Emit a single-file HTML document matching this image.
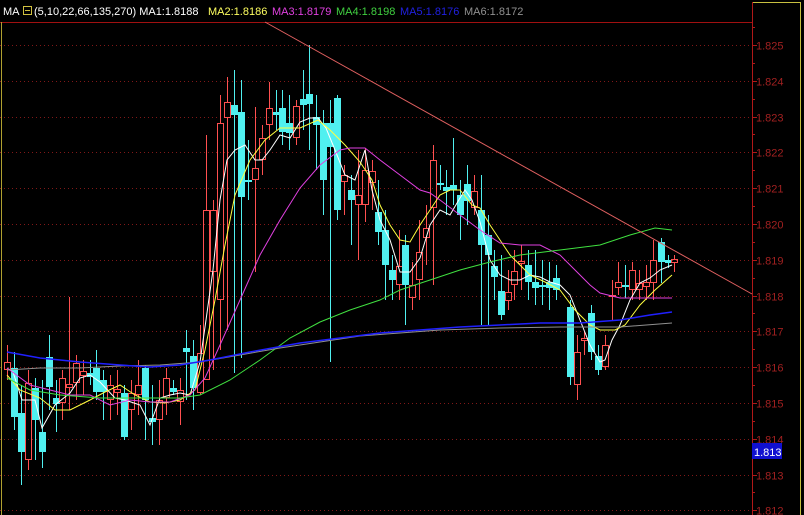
<!DOCTYPE html>
<html><head><meta charset="utf-8"><style>
html,body{margin:0;padding:0;background:#000;width:804px;height:515px;overflow:hidden}
svg{display:block}
text{font-family:"Liberation Sans",sans-serif;font-size:11px}
</style></head><body>
<svg id="s" width="804" height="515" xmlns="http://www.w3.org/2000/svg">
<rect width="804" height="515" fill="#000"/>
<line x1="0" y1="22.5" x2="752" y2="22.5" stroke="#a01010"/>
<line x1="1.5" y1="22" x2="1.5" y2="515" stroke="#b0a030"/>
<line x1="752" y1="2.5" x2="800" y2="2.5" stroke="#c8c040"/>
<line x1="800.5" y1="2" x2="800.5" y2="515" stroke="#c8c040"/>
<line x1="752.5" y1="2" x2="752.5" y2="515" stroke="#b01818"/>
<g id="grid"></g>
<g id="cd"></g>
<g id="ma" fill="none" stroke-width="1"></g>
<line x1="265" y1="22" x2="752" y2="294" stroke="#e06060"/>
<rect x="752" y="443" width="30" height="16" fill="#1010d0"/>
<text x="754" y="456" fill="#fff">1.813</text>
<text x="3" y="15" fill="#fff">MA</text>
<rect x="23.5" y="6.5" width="8" height="8" fill="none" stroke="#d0c040"/>
<line x1="25" y1="10.5" x2="30" y2="10.5" stroke="#d0c040"/>
<text x="34" y="15" fill="#fff">(5,10,22,66,135,270) MA1:1.8188</text>
<text x="208" y="15" fill="#ffff60">MA2:1.8186</text>
<text x="272" y="15" fill="#e040e0">MA3:1.8179</text>
<text x="336" y="15" fill="#40d040">MA4:1.8198</text>
<text x="400" y="15" fill="#2020e0">MA5:1.8176</text>
<text x="464" y="15" fill="#909090">MA6:1.8172</text>
</svg>
<script>
var NS="http://www.w3.org/2000/svg";
function el(p,t,a){var e=document.createElementNS(NS,t);for(var k in a)e.setAttribute(k,a[k]);p.appendChild(e);return e;}
var g=document.getElementById('grid');
var labels=["1.825","1.824","1.823","1.822","1.821","1.820","1.819","1.818","1.817","1.816","1.815","1.814","1.813","1.812"];
for(var i=0;i<14;i++){var y=Math.round(45+i*35.8)+0.5;
el(g,'line',{x1:0,y1:y,x2:752,y2:y,stroke:'#801818','stroke-dasharray':'1,3'});
el(g,'line',{x1:752,y1:y,x2:757,y2:y,stroke:'#b01818'});
var y2=Math.round(45+i*35.8-18)+0.5;el(g,'line',{x1:752,y1:y2,x2:755,y2:y2,stroke:'#b01818'});
var t=el(g,'text',{x:756,y:y+4,fill:'#a02020'});t.textContent=labels[i];}
// x, open, close, high, low ; color by open>close in y (close<open y => up/red)
var C=[[7,370,362,345,380],[14,368,417,352,430],[21,413,452,385,485],[28,460,383,370,470],[35,388,420,378,460],[42,432,452,380,468],[49,357,387,335,410],[56,398,404,380,432],[62,403,378,370,420],[69,388,384,297,410],[76,383,363,355,400],[83,376,371,360,395],[90,373,377,360,385],[96,368,392,350,400],[103,380,392,370,420],[110,400,385,375,420],[117,393,389,370,415],[124,393,437,385,440],[131,410,393,380,430],[138,395,385,360,415],[145,368,400,365,440],[152,418,422,385,445],[159,420,400,380,445],[166,398,378,368,415],[173,388,392,380,395],[180,402,390,378,425],[186,348,352,330,400],[193,356,388,340,410],[200,393,353,325,395],[206,380,210,135,380],[213,272,210,200,370],[220,300,123,95,350],[227,118,102,77,330],[234,105,115,70,373],[241,112,197,80,358],[248,180,181,140,200],[255,180,168,107,272],[262,160,138,125,175],[269,125,108,82,140],[276,112,115,90,130],[282,108,132,90,145],[289,123,133,95,150],[296,138,106,100,145],[303,99,105,70,130],[309,94,104,45,150],[316,117,125,95,170],[323,123,180,110,215],[330,123,147,100,362],[337,98,210,95,220],[344,182,175,165,215],[351,190,200,175,245],[358,205,195,150,260],[365,205,170,148,222],[372,183,171,160,210],[378,212,232,180,245],[385,230,265,210,300],[392,270,280,255,300],[399,285,266,230,300],[405,245,285,235,325],[412,298,285,262,310],[419,280,252,220,300],[426,238,228,205,265],[433,208,160,145,285],[440,183,184,165,190],[446,187,191,170,215],[453,185,190,138,205],[460,195,215,180,240],[467,184,201,165,225],[474,208,191,175,215],[481,210,245,175,325],[488,235,255,215,325],[494,266,277,250,300],[501,291,315,255,320],[508,301,292,270,310],[514,285,271,250,300],[521,264,261,245,290],[528,265,282,250,300],[535,282,288,250,305],[542,285,286,260,305],[549,282,288,262,310],[556,278,290,265,300],[570,307,377,300,385],[577,385,352,335,400],[584,341,338,332,355],[591,313,352,305,360],[598,356,370,345,375],[605,367,345,335,370],[612,297,295,280,320],[618,288,282,262,295],[625,285,287,265,298],[632,290,270,262,300],[639,290,283,270,300],[646,287,282,265,300],[653,283,260,240,300],[661,242,262,238,283],[668,260,263,255,268],[674,263,259,255,272]];
var cd=document.getElementById('cd');
C.forEach(function(c){var x=c[0],o=c[1],cl=c[2],h=c[3],l=c[4];var up=cl<o;
var col=up?'#ff5050':'#50f0f0';var top=Math.min(o,cl),bot=Math.max(o,cl);if(bot-top<2)bot=top+2;
el(cd,'line',{x1:x+0.5,y1:h,x2:x+0.5,y2:top,stroke:col});
el(cd,'line',{x1:x+0.5,y1:bot,x2:x+0.5,y2:l,stroke:col});
if(up)el(cd,'rect',{x:x-2.5,y:top+0.5,width:6,height:bot-top-1,fill:'none',stroke:col});
else el(cd,'rect',{x:x-3,y:top,width:7,height:bot-top,fill:col});});
var M={
'#ffffff':[[7,368],[13,372],[22,400],[35,400],[42,428],[55,405],[70,393],[80,378],[90,375],[100,382],[115,398],[125,400],[140,405],[150,425],[160,398],[170,395],[180,393],[190,395],[200,362],[206,320],[213,270],[220,200],[227,160],[235,150],[245,145],[255,160],[262,160],[270,150],[280,135],[290,138],[300,122],[310,118],[318,118],[326,128],[335,150],[345,175],[355,180],[365,150],[372,190],[380,220],[390,240],[400,272],[410,272],[420,258],[430,225],[440,210],[450,215],[460,198],[465,190],[472,200],[480,222],[490,260],[500,275],[510,280],[520,280],[530,275],[540,277],[550,282],[560,285],[570,295],[580,320],[590,345],[600,362],[605,360],[612,340],[620,325],[630,300],[640,283],[650,278],[660,270],[672,265]],
'#ffff40':[[7,375],[20,390],[40,398],[55,410],[70,410],[90,400],[105,392],[120,385],[135,395],[150,402],[165,403],[180,400],[195,390],[205,350],[215,300],[225,245],[235,195],[250,160],[265,140],[280,128],[300,128],[318,120],[330,130],[345,145],[360,162],[372,180],[380,205],[390,225],[400,240],[410,242],[420,225],[430,210],[440,195],[450,190],[460,190],[472,205],[480,208],[490,225],[500,240],[510,255],[520,265],[530,275],[545,282],[560,290],[575,310],[590,325],[600,330],[615,330],[625,325],[640,305],[655,290],[672,275]],
'#e040e0':[[7,368],[30,385],[50,390],[70,395],[90,395],[110,405],[130,400],[150,402],[170,402],[190,395],[205,378],[220,345],[240,300],[260,255],[280,220],[300,188],[320,165],[340,150],[350,148],[365,148],[380,160],[400,175],[420,190],[430,193],[440,200],[460,215],[480,230],[500,243],[520,245],[540,245],[560,255],[575,270],[590,285],[600,293],[620,298],[640,298],[672,298]],
'#40e040':[[7,378],[30,390],[60,395],[100,398],[140,398],[180,398],[200,395],[230,380],[260,360],[290,338],[320,322],[350,310],[380,300],[400,290],[430,280],[460,270],[490,262],[520,255],[560,250],[600,245],[630,235],[655,228],[672,230]],
'#909090':[[7,370],[40,368],[80,368],[120,366],[160,365],[200,362],[240,355],[280,348],[320,342],[360,336],[400,333],[440,330],[500,328],[560,327],[620,327],[672,323]],
'#2020ff':[[7,352],[40,358],[80,362],[120,365],[150,367],[180,365],[210,360],[250,352],[300,343],[340,338],[380,333],[420,330],[460,327],[500,325],[540,323],[580,323],[620,320],[650,315],[672,312]]};
var ma=document.getElementById('ma');
for(var k in M){el(ma,'polyline',{points:M[k].map(function(p){return p.join(',')}).join(' '),stroke:k,'stroke-width':k=='#2020ff'?1.5:1});}
</script>
</body></html>
